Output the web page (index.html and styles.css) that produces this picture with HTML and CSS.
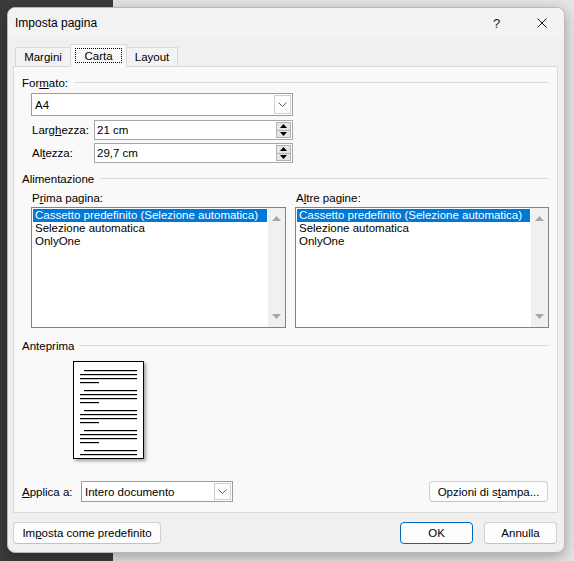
FILE: index.html
```html
<!DOCTYPE html>
<html lang="it">
<head>
<meta charset="utf-8">
<title>Imposta pagina</title>
<link rel="stylesheet" href="styles.css">
</head>
<body>
<div class="desk">
  <div class="dialog">
    <div class="titlebar">
      <span class="title">Imposta pagina</span>
      <span class="tbtn help">?</span>
      <span class="tbtn close"><svg width="10" height="10" viewBox="0 0 10 10"><path d="M0.5 0.5L9.5 9.5M9.5 0.5L0.5 9.5" stroke="#1b1b1b" stroke-width="1" fill="none"/></svg></span>
    </div>

    <div class="tabs">
      <div class="tab t1">Margini</div>
      <div class="tab sel"><span class="focus">Carta</span></div>
      <div class="tab t3">Layout</div>
    </div>

    <div class="panel">
      <div class="ghead first"><span>For<u>m</u>ato:</span><i class="gline"></i></div>

      <div class="combo a4">
        <span class="ctext">A4</span>
        <span class="dd"><svg width="9" height="5" viewBox="0 0 9 5"><path d="M0.5 0.5L4.5 4.5L8.5 0.5" stroke="#606060" stroke-width="1" fill="none"/></svg></span>
      </div>

      <div class="frow r1">
        <span class="flabel">Larg<u>h</u>ezza:</span>
        <div class="spin">
          <span class="stext">21 cm</span>
          <span class="sbtns">
            <span class="sb"><svg width="7" height="4" viewBox="0 0 7 4"><path d="M0 4L3.5 0L7 4Z" fill="#000"/></svg></span>
            <span class="sb"><svg width="7" height="4" viewBox="0 0 7 4"><path d="M0 0L3.5 4L7 0Z" fill="#000"/></svg></span>
          </span>
        </div>
      </div>
      <div class="frow r2">
        <span class="flabel">Al<u>t</u>ezza:</span>
        <div class="spin">
          <span class="stext">29,7 cm</span>
          <span class="sbtns">
            <span class="sb"><svg width="7" height="4" viewBox="0 0 7 4"><path d="M0 4L3.5 0L7 4Z" fill="#000"/></svg></span>
            <span class="sb"><svg width="7" height="4" viewBox="0 0 7 4"><path d="M0 0L3.5 4L7 0Z" fill="#000"/></svg></span>
          </span>
        </div>
      </div>

      <div class="ghead sec2"><span>Alimentazione</span><i class="gline"></i></div>

      <div class="lists">
        <div class="lcol left">
          <div class="llabel">P<u>r</u>ima pagina:</div>
          <div class="listbox">
            <div class="items">
              <div class="item on">Cassetto predefinito (Selezione automatica)</div>
              <div class="item">Selezione automatica</div>
              <div class="item">OnlyOne</div>
            </div>
            <div class="sbar">
              <svg width="9" height="5" viewBox="0 0 9 5"><path d="M0 5L4.5 0L9 5Z" fill="#a6a6a6"/></svg>
              <svg width="9" height="5" viewBox="0 0 9 5"><path d="M0 0L4.5 5L9 0Z" fill="#a6a6a6"/></svg>
            </div>
          </div>
        </div>
        <div class="lcol right">
          <div class="llabel">A<u>l</u>tre pagine:</div>
          <div class="listbox">
            <div class="items">
              <div class="item on">Cassetto predefinito (Selezione automatica)</div>
              <div class="item">Selezione automatica</div>
              <div class="item">OnlyOne</div>
            </div>
            <div class="sbar">
              <svg width="9" height="5" viewBox="0 0 9 5"><path d="M0 5L4.5 0L9 5Z" fill="#a6a6a6"/></svg>
              <svg width="9" height="5" viewBox="0 0 9 5"><path d="M0 0L4.5 5L9 0Z" fill="#a6a6a6"/></svg>
            </div>
          </div>
        </div>
      </div>

      <div class="ghead sec3"><span>Anteprima</span><i class="gline"></i></div>

      <div class="preview">
        <svg width="69" height="96" viewBox="0 0 69 96">
          <g fill="#000">
            <rect x="10" y="8" width="53" height="1.2"/>
            <rect x="6" y="12" width="57" height="1.2"/>
            <rect x="6" y="16" width="57" height="1.2"/>
            <rect x="6" y="20" width="19" height="1.2"/>
            <rect x="10" y="28" width="53" height="1.2"/>
            <rect x="6" y="32" width="57" height="1.2"/>
            <rect x="6" y="36" width="57" height="1.2"/>
            <rect x="6" y="40" width="19" height="1.2"/>
            <rect x="10" y="48" width="53" height="1.2"/>
            <rect x="6" y="52" width="57" height="1.2"/>
            <rect x="6" y="56" width="57" height="1.2"/>
            <rect x="6" y="60" width="19" height="1.2"/>
            <rect x="10" y="68" width="53" height="1.2"/>
            <rect x="6" y="72" width="57" height="1.2"/>
            <rect x="6" y="76" width="57" height="1.2"/>
            <rect x="6" y="80" width="19" height="1.2"/>
            <rect x="10" y="88" width="53" height="1.2"/>
            <rect x="6" y="92" width="57" height="1.2"/>
          </g>
        </svg>
      </div>

      <div class="applyrow">
        <span class="alabel"><u>A</u>pplica a:</span>
        <div class="combo apply">
          <span class="ctext">Intero documento</span>
          <span class="dd"><svg width="9" height="5" viewBox="0 0 9 5"><path d="M0.5 0.5L4.5 4.5L8.5 0.5" stroke="#606060" stroke-width="1" fill="none"/></svg></span>
        </div>
        <span class="spacer"></span>
        <span class="btn opts">Opzioni di s<u>t</u>ampa...</span>
      </div>
    </div>

    <div class="bottom">
      <span class="btn def">Im<u>p</u>osta come predefinito</span>
      <span class="spacer"></span>
      <span class="btn ok">OK</span>
      <span class="btn cancel">Annulla</span>
    </div>
  </div>
</div>
</body>
</html>
```

FILE: styles.css
```css
* { box-sizing: border-box; }
html, body { margin: 0; padding: 0; }
body {
  width: 574px;
  height: 561px;
  overflow: hidden;
  background: linear-gradient(to right, #3b3b3b 0, #3b3b3b 113px, #e4e4e4 113px);
  font-family: "Liberation Sans", Arial, sans-serif;
  font-size: 11.5px;
  color: #000;
}
u { text-decoration: underline; text-underline-offset: 1px; }

.desk { padding: 7px 0 0 7px; }

.dialog {
  width: 558px;
  height: 546px;
  background: #f0f0f0;
  border: 1px solid #b9b9b9;
  border-radius: 8px;
  box-shadow: 0 4px 14px rgba(0, 0, 0, 0.3);
  display: flex;
  flex-direction: column;
  overflow: hidden;
}

/* title bar */
.titlebar {
  flex: none;
  height: 30px;
  background: #f3f3f3;
  display: flex;
  align-items: center;
  padding-left: 7px;
}
.title { flex: 1; font-size: 12px; }
.tbtn {
  width: 45px;
  height: 30px;
  display: flex;
  align-items: center;
  justify-content: center;
}
.help { font-size: 13px; color: #1b1b1b; }

/* tabs */
.tabs {
  flex: none;
  height: 28px;
  display: flex;
  align-items: flex-end;
  padding-left: 7px;
}
.tab {
  height: 19px;
  border: 1px solid #d9d9d9;
  border-bottom: none;
  background: #f3f3f3;
  display: flex;
  align-items: center;
  justify-content: center;
  padding-bottom: 1px;
}
.t1 { width: 55px; border-right: none; }
.t3 { width: 51px; border-left: none; }
.tab.sel {
  width: 57px;
  height: 23px;
  margin-bottom: -1px;
  background: #f9f9f9;
  position: relative;
  z-index: 1;
  align-items: flex-start;
  padding-top: 3px;
}
.focus {
  width: 47px;
  height: 15px;
  border: 1px dotted #000;
  display: flex;
  align-items: center;
  justify-content: center;
}

/* panel */
.panel {
  flex: none;
  height: 447px;
  margin: 0 6px 0 5px;
  border: 1px solid #d9d9d9;
  background: #f9f9f9;
  display: flex;
  flex-direction: column;
}

.ghead {
  height: 15px;
  margin: 0 8px 0 8px;
  display: flex;
  align-items: center;
  gap: 6px;
}
.gline { flex: 1; height: 0; border-top: 1px solid #dcdcdc; }
.ghead.first { margin-top: 8px; }
.ghead.sec2 { margin-top: 8px; }
.ghead.sec3 { margin-top: 10px; }

.combo {
  background: #fff;
  border: 1px solid #9c9c9c;
  display: flex;
  align-items: stretch;
}
.ctext { flex: 1; display: flex; align-items: center; padding-left: 3px; }
.dd {
  width: 17px;
  margin: 1px;
  border: 1px solid #d0d0d0;
  background: #fdfdfd;
  display: flex;
  align-items: center;
  justify-content: center;
}
.combo.a4 { margin: 3px 0 0 17px; width: 262px; height: 23px; }

.frow {
  margin-left: 17px;
  height: 20px;
  display: flex;
  align-items: center;
}
.frow.r1 { margin-top: 4px; }
.frow.r2 { margin-top: 3px; }
.flabel { width: 63px; padding-left: 1px; }
.spin {
  width: 199px;
  height: 20px;
  background: #fff;
  border: 1px solid #a7a7a7;
  display: flex;
}
.stext { flex: 1; display: flex; align-items: center; padding-left: 2px; }
.sbtns {
  width: 15px;
  margin: 1px 1px 1px 0;
  display: flex;
  flex-direction: column;
}
.sb {
  flex: 1;
  background: #e6e6e6;
  border: 1px solid #b2b2b2;
  display: flex;
  align-items: center;
  justify-content: center;
}
.sb + .sb { border-top: none; }

/* lists */
.lists {
  margin: 5px 0 0 17px;
  display: flex;
  gap: 9px;
}
.lcol.left { width: 255px; }
.lcol.right { width: 254px; }
.llabel { height: 15px; line-height: 15px; padding-left: 1px; }
.listbox {
  margin-top: 1px;
  height: 121px;
  border: 1px solid #828282;
  background: #fff;
  display: flex;
}
.items { flex: 1; padding: 1px; }
.item { height: 13px; line-height: 13px; padding-left: 2px; white-space: nowrap; }
.item.on { background: #0078d7; color: #fff; }
.sbar {
  width: 17px;
  background: #f0f0f0;
  display: flex;
  flex-direction: column;
  align-items: center;
  justify-content: space-between;
  padding: 8px 0 8px;
}

/* preview */
.preview {
  margin: 8px 0 0 59px;
  width: 71px;
  height: 98px;
  border: 1px solid #000;
  background: #fff;
  box-shadow: 2px 2px 3px rgba(0, 0, 0, 0.35);
}
.preview svg { display: block; }

/* apply row */
.applyrow {
  margin: 22px 9px 0 8px;
  height: 21px;
  display: flex;
  align-items: center;
}
.alabel { width: 59px; }
.combo.apply { width: 152px; height: 21px; }
.spacer { flex: 1; }

.btn {
  height: 21px;
  background: #fdfdfd;
  border: 1px solid #d0d0d0;
  border-bottom-color: #c2c2c2;
  border-radius: 4px;
  display: flex;
  align-items: center;
  justify-content: center;
}
.opts { width: 119px; }

/* bottom buttons */
.bottom {
  flex: none;
  margin: 9px 7px 0 5px;
  height: 22px;
  display: flex;
  gap: 11px;
}
.bottom .btn { height: 22px; }
.def { width: 148px; }
.ok { width: 73px; border: 1px solid #0067c0; }
.cancel { width: 73px; }
```
